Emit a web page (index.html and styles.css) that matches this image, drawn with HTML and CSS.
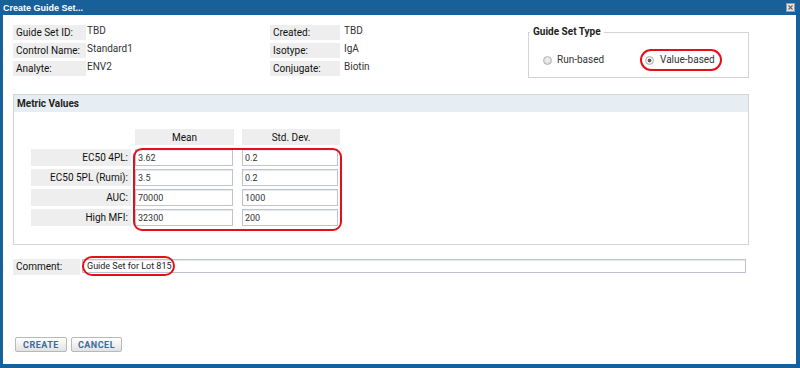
FILE: index.html
```html
<!DOCTYPE html>
<html>
<head>
  <meta http-equiv="content-type" content="text/html; charset=UTF-8" />
  <title>Create Guide Set</title>
  <link rel="stylesheet" href="styles.css">
</head>
<body>
<div class="win">
  <div class="titlebar">
    <span class="title">Create Guide Set...</span>
    <span class="close">
      <svg width="9" height="9" viewBox="0 0 9 9"><rect x="0.5" y="0.5" width="8" height="8" fill="#e6e6e6" stroke="#9a9a9a"/><path d="M2.5 2.5 L6.5 6.5 M6.5 2.5 L2.5 6.5" stroke="#666" stroke-width="1.2"/></svg>
    </span>
  </div>
  <div class="body">
    <div class="top">
      <div class="info">
        <div class="col col1">
          <div class="row"><span class="lbl l1">Guide Set ID:</span><span class="val">TBD</span></div>
          <div class="row"><span class="lbl l1">Control Name:</span><span class="val">Standard1</span></div>
          <div class="row"><span class="lbl l1">Analyte:</span><span class="val">ENV2</span></div>
        </div>
        <div class="col col2">
          <div class="row"><span class="lbl l2">Created:</span><span class="val">TBD</span></div>
          <div class="row"><span class="lbl l2">Isotype:</span><span class="val">IgA</span></div>
          <div class="row"><span class="lbl l2">Conjugate:</span><span class="val">Biotin</span></div>
        </div>
      </div>
      <fieldset class="type">
        <legend>Guide Set Type</legend>
        <div class="radios">
          <label class="radio run"><span class="dot"></span>Run-based</label>
          <label class="radio"><span class="dot on"></span>Value-based<span class="mark pill-type"></span></label>
        </div>
      </fieldset>
    </div>

    <div class="panel">
      <div class="panel-head">Metric Values</div>
      <div class="panel-body">
        <div class="metrics">
          <span></span>
          <span class="mh mean">Mean</span>
          <span class="mh">Std. Dev.</span>

          <span class="ml">EC50 4PL:</span>
          <input class="inp wide" value="3.62">
          <input class="inp" value="0.2">

          <span class="ml">EC50 5PL (Rumi):</span>
          <input class="inp wide" value="3.5">
          <input class="inp" value="0.2">

          <span class="ml">AUC:</span>
          <input class="inp wide" value="70000">
          <input class="inp" value="1000">

          <span class="ml">High MFI:</span>
          <input class="inp wide" value="32300">
          <input class="inp" value="200">

          <span class="mark box-metrics"></span>
        </div>
      </div>
    </div>

    <div class="comment">
      <span class="clbl">Comment:</span>
      <div class="cwrap">
        <input class="cinp" value="Guide Set for Lot 815">
        <span class="mark pill-comment"></span>
      </div>
    </div>

    <div class="buttons">
      <button class="btn">CREATE</button>
      <button class="btn">CANCEL</button>
    </div>
  </div>
</div>
</body>
</html>
```

FILE: styles.css
```css
body {
  margin: 0;
  font-family: Roboto, "Liberation Sans", sans-serif;
  font-size: 10px;
  color: #222;
}

.win {
  width: 800px;
  height: 368px;
  box-sizing: border-box;
  background: #17609a;
  padding: 0 4px 4px 3px;
  display: flex;
  flex-direction: column;
}

.titlebar {
  height: 15px;
  display: flex;
  align-items: center;
  justify-content: space-between;
  color: #fff;
  font: bold 9px "Liberation Sans", Arial, sans-serif;
}
.close {
  display: flex;
  margin-right: 1px;
}

.body {
  flex: 1;
  background: #fff;
  display: flex;
  flex-direction: column;
  padding: 10px 0 12px 10px;
}

/* header info */
.top {
  display: flex;
  align-items: flex-start;
}
.info {
  display: flex;
  width: 515px;
}
.col1 { width: 257px; }
.col2 { flex: 1; }
.row {
  display: flex;
  align-items: flex-start;
  height: 15px;
  margin-bottom: 3px;
}
.lbl {
  background: #eeeeee;
  padding-left: 3px;
  line-height: 15px;
  box-sizing: border-box;
  color: #111;
}
.l1 { width: 73px; }
.l2 { width: 70px; margin-right: 3px; }
.val {
  line-height: 11px;
  padding-left: 1px;
  color: #333;
}

/* guide set type */
.type {
  margin: 1px 0 0 0;
  padding: 16px 0 11px 14px;
  width: 221px;
  box-sizing: border-box;
  border: 1px solid #d4d4d4;
  min-width: 0;
}
.type legend {
  padding: 0 3px;
  margin-left: -13px;
  font-weight: bold;
  line-height: 12px;
  color: #222;
}
.radios {
  display: flex;
  align-items: center;
  height: 12px;
}
.radio {
  display: flex;
  align-items: center;
  position: relative;
  line-height: 12px;
  color: #333;
}
.radio.run { width: 102px; }
.dot {
  width: 9px;
  height: 9px;
  box-sizing: border-box;
  border-radius: 50%;
  border: 1px solid #b4b4b4;
  background: radial-gradient(circle at 50% 40%, #f6f6f6, #cfcfcf);
  margin-right: 5px;
}
.dot.on {
  margin-right: 6px;
  background: radial-gradient(circle, #5e5e5e 0 1.5px, #f2f2f2 2.2px, #d2d2d2 100%);
}

/* red annotation marks */
.mark {
  position: absolute;
  border: 2px solid #e3101a;
  box-sizing: border-box;
}
.pill-type {
  left: -5px;
  top: -5px;
  width: 82px;
  height: 22px;
  border-radius: 11px;
}
.box-metrics {
  left: 102px;
  top: 19px;
  width: 209px;
  height: 83px;
  border-radius: 9px;
}
.pill-comment {
  left: 0;
  top: -3px;
  width: 93px;
  height: 20px;
  border-radius: 10px;
}

/* metric values panel */
.panel {
  margin-top: 15px;
  width: 736px;
  box-sizing: border-box;
  border: 1px solid #d4d4d4;
}
.panel-head {
  background: #e6edf3;
  height: 17px;
  line-height: 17px;
  padding-left: 3px;
  font-weight: bold;
  color: #222;
}
.panel-body {
  padding: 17px 0 18px 17px;
}
.metrics {
  position: relative;
  display: grid;
  grid-template-columns: 100px 103px 98px;
  grid-auto-rows: 17px;
  column-gap: 4px;
  row-gap: 3px;
  width: max-content;
}
.mh {
  background: #eeeeee;
  text-align: center;
  line-height: 17px;
  margin-bottom: 1px;
  color: #111;
}
.mh.mean { width: 99px; }
.ml {
  background: #eeeeee;
  text-align: right;
  padding-right: 3px;
  line-height: 17px;
  color: #111;
}
.inp {
  width: 96px;
  height: 17px;
  box-sizing: border-box;
  margin: 0;
  border: 1px solid #bfc2cf;
  box-shadow: inset 0 1px 1px #e6e6ee;
  padding: 0 0 0 2px;
  font: 9px Roboto, "Liberation Sans", sans-serif;
  color: #333;
  background: #fff;
}
.inp.wide { width: 98px; }

/* comment */
.comment {
  display: flex;
  align-items: flex-start;
  margin-top: 14px;
}
.clbl {
  background: #eeeeee;
  width: 67px;
  height: 16px;
  line-height: 16px;
  padding-left: 3px;
  box-sizing: border-box;
  color: #111;
}
.cwrap {
  position: relative;
  margin-left: 2px;
}
.cinp {
  display: block;
  width: 664px;
  height: 14px;
  box-sizing: border-box;
  margin: 0;
  border: 1px solid #bfc2cf;
  box-shadow: inset 0 1px 1px #e6e6ee;
  padding: 0 0 0 4px;
  font: 9px Roboto, "Liberation Sans", sans-serif;
  color: #222;
}

/* buttons */
.buttons {
  margin-top: auto;
  display: flex;
  gap: 4px;
  padding-left: 2px;
}
.btn {
  width: 52px;
  height: 15px;
  padding: 0;
  border: 1px solid #b8b8b8;
  border-radius: 2px;
  background: linear-gradient(#ffffff, #e2e2e2);
  font: bold 9px Roboto, "Liberation Sans", sans-serif;
  color: #3b6a9c;
  letter-spacing: 0.5px;
}
.btn + .btn { width: 51px; }
```
